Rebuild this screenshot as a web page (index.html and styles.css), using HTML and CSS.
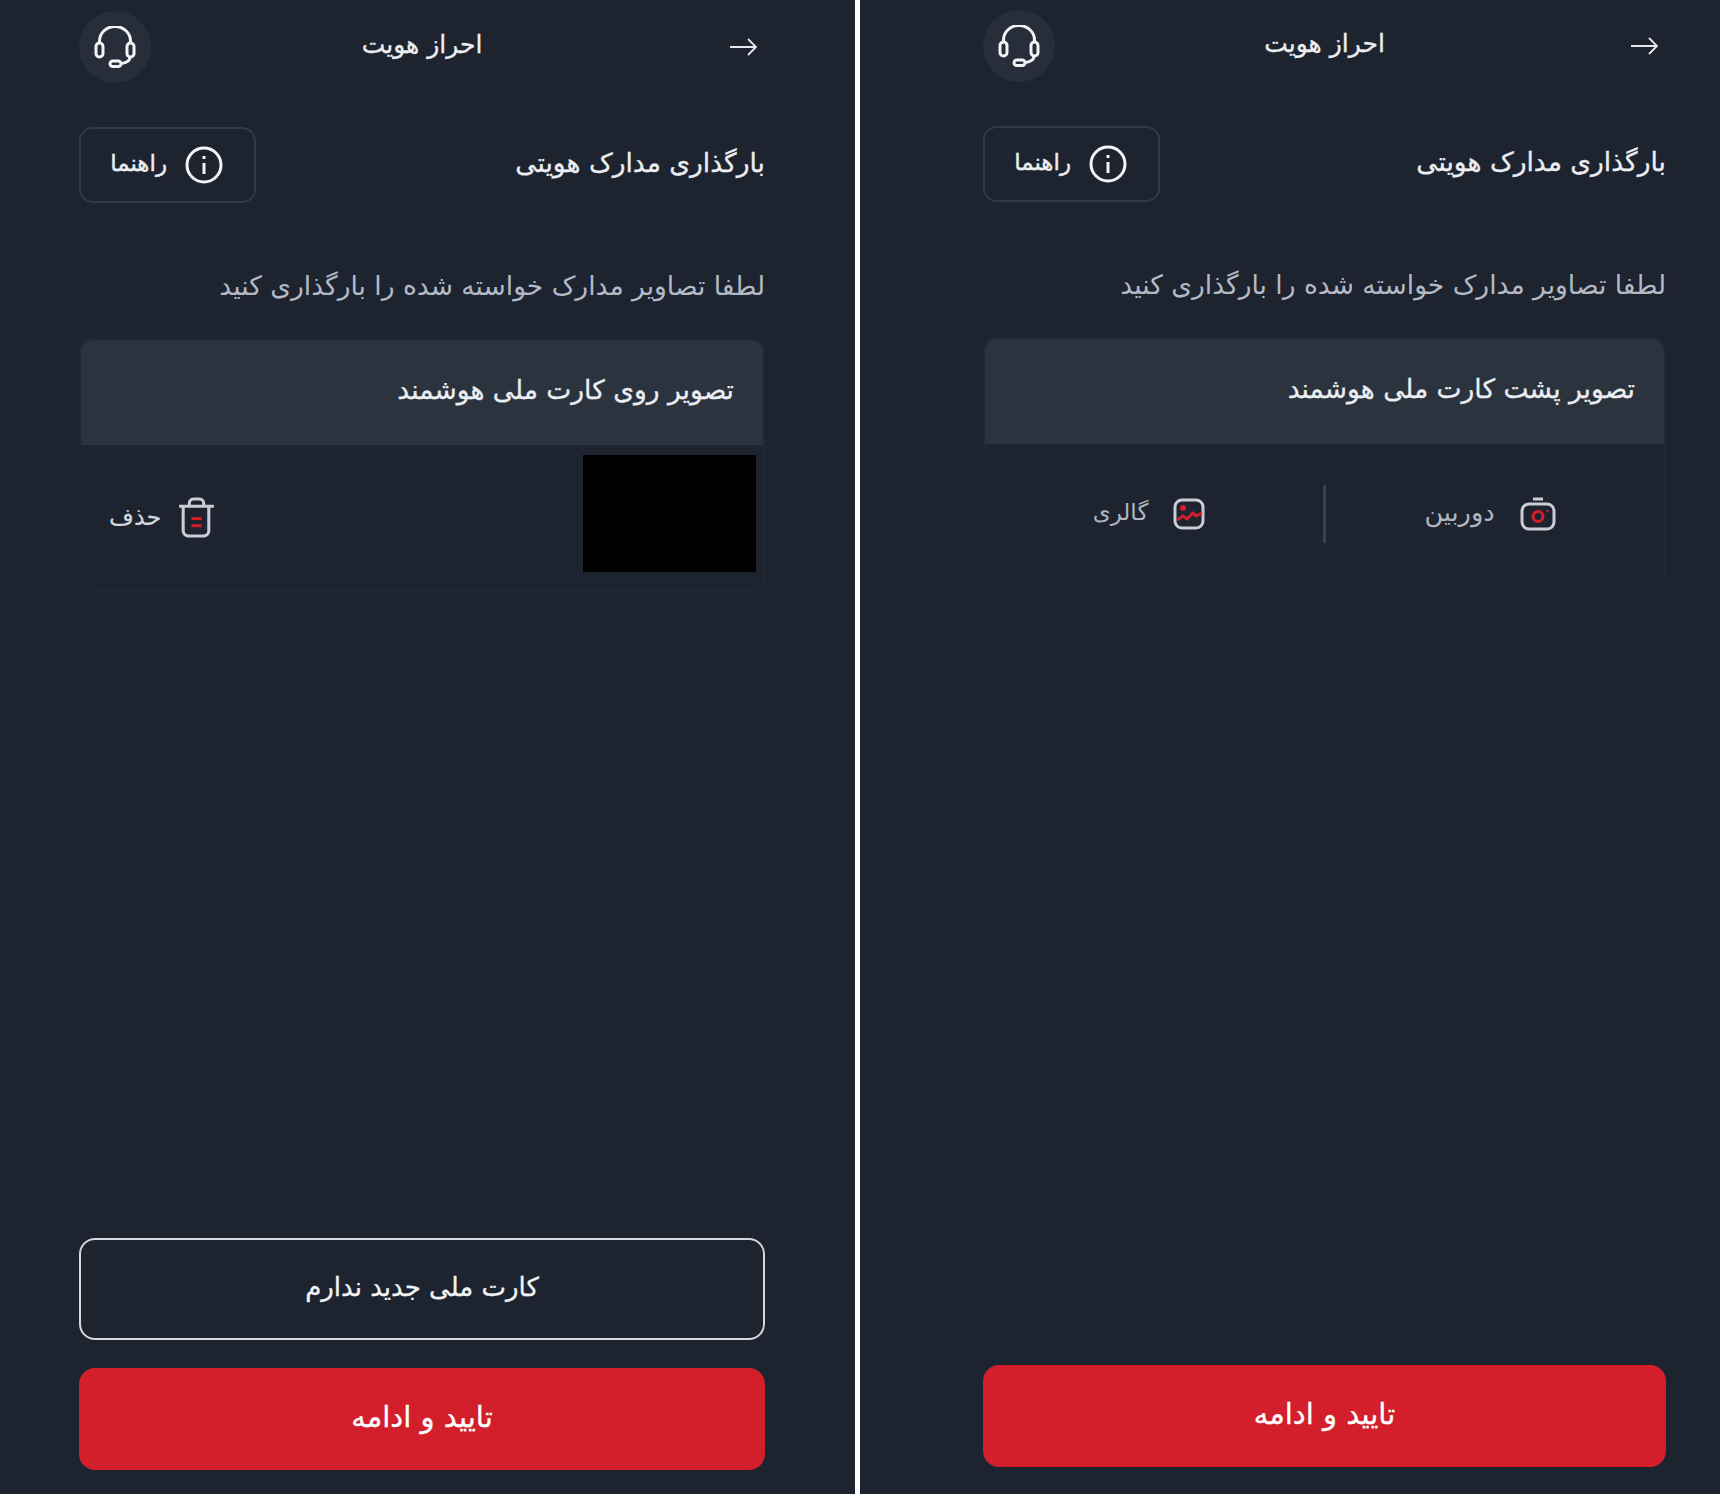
FILE: index.html
```html
<!DOCTYPE html>
<html lang="fa" dir="rtl">

<head>
    <meta charset="UTF-8">
    <title>احراز هویت</title>
    <link rel="stylesheet" href="styles.css">
</head>

<body>
    <div class="screens">
        <!-- back of card, sits on the right -->
        <section class="panel panel-back">
            <header class="topbar">
                <svg class="arrow" viewBox="0 0 28 18"><path d="M1 9h26M19 1l8 8-8 8"/></svg>
                <div class="topbar-title">احراز هویت</div>
                <div class="support">
                    <svg class="headset" viewBox="0 0 42 42"><path d="M5.500 18v-3a15.500 14.500 0 0 1 31 0v3"/><rect x="2" y="17" width="7" height="14" rx="3.500"/><rect x="33" y="17" width="7" height="14" rx="3.500"/><path d="M36 31c0 4-4 6-9 6.500"/><rect x="16" y="35" width="11" height="5.500" rx="2.750"/></svg>
                </div>
            </header>
            <div class="heading-row">
                <h1 class="heading">بارگذاری مدارک هویتی</h1>
                <button class="guide">
                    <svg class="info" viewBox="0 0 38 38"><circle cx="19" cy="19" r="17"/><path d="M19 17v11M19 10v3"/></svg>
                    <span>راهنما</span>
                </button>
            </div>
            <p class="hint">لطفا تصاویر مدارک خواسته شده را بارگذاری کنید</p>
            <div class="card">
                <div class="card-head">تصویر پشت کارت ملی هوشمند</div>
                <div class="card-body sources">
                    <div class="source source-camera">
                        <svg class="camera" viewBox="0 0 36 34"><path d="M13 2h10"/><rect x="2" y="7" width="32" height="25" rx="7"/><circle class="red" cx="18" cy="19.500" r="5"/><circle class="red-dot" cx="27.500" cy="14" r="1.200"/></svg>
                        <span>دوربین</span>
                    </div>
                    <div class="divider"></div>
                    <div class="source source-gallery">
                        <svg class="gallery" viewBox="0 0 32 32"><rect x="2" y="2" width="28" height="28" rx="7"/><circle class="red-dot" cx="10" cy="10" r="3"/><path class="red" d="M4 22l6-4 4 3 6-6 3 3 6-3"/></svg>
                        <span>گالری</span>
                    </div>
                </div>
            </div>
            <div class="actions">
                <button class="btn btn-primary">تایید و ادامه</button>
            </div>
        </section>

        <div class="gutter"></div>

        <!-- front of card, sits on the left -->
        <section class="panel panel-front">
            <header class="topbar">
                <svg class="arrow" viewBox="0 0 28 18"><path d="M1 9h26M19 1l8 8-8 8"/></svg>
                <div class="topbar-title">احراز هویت</div>
                <div class="support">
                    <svg class="headset" viewBox="0 0 42 42"><path d="M5.500 18v-3a15.500 14.500 0 0 1 31 0v3"/><rect x="2" y="17" width="7" height="14" rx="3.500"/><rect x="33" y="17" width="7" height="14" rx="3.500"/><path d="M36 31c0 4-4 6-9 6.500"/><rect x="16" y="35" width="11" height="5.500" rx="2.750"/></svg>
                </div>
            </header>
            <div class="heading-row">
                <h1 class="heading">بارگذاری مدارک هویتی</h1>
                <button class="guide">
                    <svg class="info" viewBox="0 0 38 38"><circle cx="19" cy="19" r="17"/><path d="M19 17v11M19 10v3"/></svg>
                    <span>راهنما</span>
                </button>
            </div>
            <p class="hint">لطفا تصاویر مدارک خواسته شده را بارگذاری کنید</p>
            <div class="card">
                <div class="card-head">تصویر روی کارت ملی هوشمند</div>
                <div class="card-body uploaded">
                    <div class="card-image"></div>
                    <div class="delete">
                        <svg class="trash" viewBox="0 0 36 40"><path d="M1 9h34M11 9V6a4 4 0 0 1 4-4h6a4 4 0 0 1 4 4v3M5 9v24a5 5 0 0 0 5 5h15a5 5 0 0 0 5-5V9"/><path class="red" d="M13 21h10M13 28h10"/></svg>
                        <span>حذف</span>
                    </div>
                </div>
            </div>
            <div class="actions">
                <button class="btn btn-outline">کارت ملی جدید ندارم</button>
                <button class="btn btn-primary">تایید و ادامه</button>
            </div>
        </section>
    </div>
</body>

</html>
```

FILE: styles.css
```css
body {
    margin: 0;
    padding: 0;
    background-color: #fff;
    font-family: 'DejaVu Sans', sans-serif;
    color: #eceef1;
}

.screens {
    display: flex;
    height: 1494px;
}

.gutter {
    width: 5px;
    background-color: #fff;
}

.panel {
    display: flex;
    flex-direction: column;
    box-sizing: border-box;
    background-color: #1d2430;
}

.panel-back {
    width: 860px;
    padding: 10px 54px 27px 123px;
}

.panel-front {
    width: 855px;
    padding: 11px 90px 24px 79px;
}

.topbar {
    display: grid;
    grid-template-columns: 1fr auto 1fr;
    align-items: center;
    height: 72px;
}

.topbar-title {
    padding-bottom: 6px;
    font-size: 25px;
    -webkit-text-stroke: 0.3px;
}

.arrow {
    width: 28px;
    height: 18px;
    margin-right: 8px;
    fill: none;
    stroke: #e6e8ec;
    stroke-width: 1.8;
}

.support {
    display: flex;
    align-items: center;
    justify-content: center;
    justify-self: end;
    width: 72px;
    height: 72px;
    border-radius: 50%;
    background-color: #272e3a;
}

.headset {
    width: 42px;
    height: 42px;
    fill: none;
    stroke: #f2f3f5;
    stroke-width: 3;
}

.heading-row {
    display: flex;
    align-items: center;
    justify-content: space-between;
    margin-top: 44px;
}

.heading {
    margin: 0;
    padding-bottom: 5px;
    font-size: 26.500px;
    font-weight: normal;
    -webkit-text-stroke: 0.3px;
}

.guide {
    display: flex;
    align-items: center;
    flex-direction: row;
    gap: 18px;
    box-sizing: border-box;
    width: 177px;
    height: 76px;
    padding: 0 31px 0 0;
    border: 2px solid #323945;
    border-radius: 14px;
    background: none;
    color: #eceef1;
    font-family: inherit;
    font-size: 23px;
    -webkit-text-stroke: 0.4px;
}

.guide span {
    padding-bottom: 4px;
}

.info {
    width: 38px;
    height: 38px;
    fill: none;
    stroke: #f2f3f5;
    stroke-width: 3;
}

.hint {
    margin: 63px 0 0;
    font-size: 26.500px;
    line-height: 40px;
    color: #b4bac5;
}

.card {
    margin-top: 32px;
    border: 2px solid #212835;
    border-radius: 14px;
    overflow: hidden;
}

.card-head {
    display: flex;
    align-items: center;
    box-sizing: border-box;
    height: 105px;
    padding: 0 29px 6px 0;
    background-color: #2b333f;
    font-size: 26.500px;
    -webkit-text-stroke: 0.3px;
}

.card-body {
    display: flex;
    align-items: center;
}

.uploaded {
    justify-content: space-between;
    height: 144px;
    padding: 0 7px 0 28px;
}

.card-image {
    width: 173px;
    height: 117px;
    margin-bottom: 7px;
    background-color: #000;
}

.delete {
    display: flex;
    align-items: center;
    gap: 17px;
    color: #d5d8dd;
    font-size: 24px;
    -webkit-text-stroke: 0.2px;
}

.trash {
    width: 37px;
    height: 41px;
    fill: none;
    stroke: #c9ced6;
    stroke-width: 3;
}

.sources {
    height: 139px;
}

.source {
    flex: 1;
    display: flex;
    align-items: center;
    justify-content: center;
    gap: 25px;
    padding-right: 10px;
    color: #b0b6c2;
}

.source-camera {
    font-size: 25.500px;
}

.source-gallery {
    font-size: 23px;
}

.source span {
    padding-bottom: 4px;
}

.divider {
    width: 3px;
    height: 58px;
    background-color: #3a414d;
}

.camera {
    width: 36px;
    height: 34px;
}

.gallery {
    width: 32px;
    height: 32px;
}

.camera, .gallery {
    fill: none;
    stroke: #c9ced6;
    stroke-width: 3;
}

.camera .red, .gallery .red, .trash .red {
    stroke: #d21f2b;
}

.red-dot {
    fill: #d21f2b;
    stroke: none;
}

.actions {
    display: flex;
    flex-direction: column;
    gap: 28px;
    margin-top: auto;
}

.btn {
    width: 100%;
    height: 102px;
    padding-bottom: 5px;
    border-radius: 16px;
    font-family: inherit;
    font-size: 26px;
    -webkit-text-stroke: 0.3px;
}

.btn-outline {
    border: 2px solid #d5d8dd;
    background: none;
    color: #f2f3f5;
}

.btn-primary {
    border: none;
    background-color: #d21f2b;
    color: #fff;
    font-size: 29px;
}
```
